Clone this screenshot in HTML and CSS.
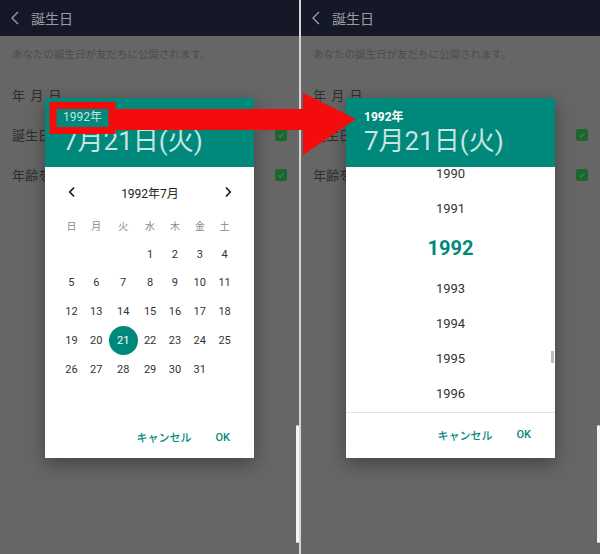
FILE: index.html
```html
<!DOCTYPE html>
<html lang="ja">
<head>
    <meta charset="UTF-8">
    <meta name="viewport" content="width=device-width, initial-scale=1.0">
    <title>誕生日</title>
    <link rel="stylesheet" href="styles.css">
</head>
<body>
    <div class="screens">
        <!-- 左: カレンダー表示 -->
        <section class="phone">
            <header class="appbar">
                <svg class="back" width="10" height="14" viewBox="0 0 10 14"><path d="M8 1L2 7l6 6" fill="none" stroke="currentColor" stroke-width="1.4"/></svg>
                <span class="appbar-title">誕生日</span>
            </header>
            <p class="note">あなたの誕生日が友だちに公開されます。</p>
            <div class="row"><span class="spaced">年 月 日</span></div>
            <div class="row"><span>誕生日を公開</span><span class="check"><svg width="8" height="8" viewBox="0 0 8 8"><path d="M1.5 4.2l1.7 1.6 3.3-3.4" fill="none" stroke="#4f9a63" stroke-width="1"/></svg></span></div>
            <div class="row"><span>年齢を公開</span><span class="check"><svg width="8" height="8" viewBox="0 0 8 8"><path d="M1.5 4.2l1.7 1.6 3.3-3.4" fill="none" stroke="#4f9a63" stroke-width="1"/></svg></span></div>
            <span class="edge"></span>

            <div class="dialog">
                <div class="dialog-head">
                    <div class="head-year">1992年</div>
                    <div class="head-date">7月21日(火)</div>
                </div>
                <div class="dialog-body">
                    <div class="month-nav">
                        <svg width="8" height="12" viewBox="0 0 8 12"><path d="M6 1.5L1.8 6 6 10.5" fill="none" stroke="#222" stroke-width="1.8"/></svg>
                        <span class="month-title">1992年7月</span>
                        <svg width="8" height="12" viewBox="0 0 8 12"><path d="M2 1.5L6.2 6 2 10.5" fill="none" stroke="#222" stroke-width="1.8"/></svg>
                    </div>
                    <div class="cal" id="cal">
                        <span class="wd">日</span><span class="wd">月</span><span class="wd">火</span><span class="wd">水</span><span class="wd">木</span><span class="wd">金</span><span class="wd">土</span>
                    </div>
                </div>
                <div class="dialog-actions">
                    <span>キャンセル</span>
                    <span>OK</span>
                </div>
            </div>
        </section>

        <div class="divider"></div>

        <!-- 右: 年の選択 -->
        <section class="phone">
            <header class="appbar">
                <svg class="back" width="10" height="14" viewBox="0 0 10 14"><path d="M8 1L2 7l6 6" fill="none" stroke="currentColor" stroke-width="1.4"/></svg>
                <span class="appbar-title">誕生日</span>
            </header>
            <p class="note">あなたの誕生日が友だちに公開されます。</p>
            <div class="row"><span class="spaced">年 月 日</span></div>
            <div class="row"><span>誕生日を公開</span><span class="check"><svg width="8" height="8" viewBox="0 0 8 8"><path d="M1.5 4.2l1.7 1.6 3.3-3.4" fill="none" stroke="#4f9a63" stroke-width="1"/></svg></span></div>
            <div class="row"><span>年齢を公開</span><span class="check"><svg width="8" height="8" viewBox="0 0 8 8"><path d="M1.5 4.2l1.7 1.6 3.3-3.4" fill="none" stroke="#4f9a63" stroke-width="1"/></svg></span></div>
            <span class="edge"></span>

            <div class="dialog">
                <div class="dialog-head">
                    <div class="head-year active">1992年</div>
                    <div class="head-date">7月21日(火)</div>
                </div>
                <div class="dialog-body years">
                    <ul class="year-list">
                        <li>1990</li>
                        <li>1991</li>
                        <li class="current">1992</li>
                        <li>1993</li>
                        <li>1994</li>
                        <li>1995</li>
                        <li>1996</li>
                    </ul>
                    <span class="scroll-thumb"></span>
                </div>
                <div class="dialog-actions ruled">
                    <span>キャンセル</span>
                    <span>OK</span>
                </div>
            </div>
        </section>

        <!-- 赤い矢印 -->
        <svg class="callout" width="600" height="200" viewBox="0 0 600 200">
            <rect x="53" y="105.5" width="59" height="25" fill="none" stroke="#f40b0b" stroke-width="7"/>
            <polygon points="112,109 303,109 303,93 356,119 303,155 303,130 112,130" fill="#f40b0b"/>
        </svg>
    </div>

    <script>
        // 1992年7月のカレンダーを組み立てる (1日は水曜日)
        const cal = document.getElementById('cal');
        const firstDay = 3;
        for (let i = 0; i < firstDay; i++) {
            cal.appendChild(document.createElement('span'));
        }
        for (let d = 1; d <= 31; d++) {
            const cell = document.createElement('span');
            cell.className = d === 21 ? 'day selected' : 'day';
            cell.textContent = d;
            cal.appendChild(cell);
        }
    </script>
</body>
</html>
```

FILE: styles.css
```css
body {
    margin: 0;
    padding: 0;
    background-color: #656565;
    font-family: Roboto, "Noto Sans CJK JP", sans-serif;
}

.screens {
    position: relative;
    display: flex;
    width: 600px;
    height: 554px;
    overflow: hidden;
}

.phone {
    position: relative;
    width: 299px;
    height: 554px;
    background-color: #666666;
}

.divider {
    width: 2px;
    background-color: #d6d6d6;
}

.appbar {
    display: flex;
    align-items: center;
    height: 36px;
    padding-left: 10px;
    background-color: #151827;
    color: #9b9da6;
}

.appbar-title {
    margin-left: 11px;
    font-size: 14px;
}

.note {
    margin: 0;
    height: 38px;
    line-height: 38px;
    padding-left: 12px;
    font-size: 10.5px;
    color: #4c4c4c;
}

.row {
    display: flex;
    align-items: center;
    justify-content: space-between;
    height: 40px;
    padding: 0 12px;
    font-size: 13px;
    color: #2e2e2e;
}

.spaced {
    letter-spacing: 1px;
}

.check {
    display: flex;
    align-items: center;
    justify-content: center;
    width: 12px;
    height: 12px;
    margin-top: 1px;
    border-radius: 2px;
    background-color: #1d6630;
}

.edge {
    position: absolute;
    right: 0;
    top: 425px;
    width: 3px;
    height: 118px;
    border-radius: 2px;
    background-color: #f4f4f4;
}

/* ダイアログ */
.dialog {
    position: absolute;
    left: 45px;
    top: 98px;
    width: 209px;
    height: 360px;
    display: flex;
    flex-direction: column;
    background-color: #ffffff;
    box-shadow: 0 6px 18px rgba(0, 0, 0, 0.35);
}

.dialog-head {
    height: 69px;
    box-sizing: border-box;
    padding: 12px 0 0 18px;
    background-color: #00897b;
    color: rgba(255, 255, 255, 0.78);
}

.head-year {
    font-size: 12px;
    line-height: 14px;
}

.head-year.active {
    color: #ffffff;
    font-weight: 700;
}

.head-date {
    margin-top: 1px;
    font-size: 26px;
    line-height: 32px;
}

.dialog-body {
    flex: 1;
}

.month-nav {
    display: flex;
    align-items: center;
    justify-content: space-between;
    height: 38px;
    padding: 6px 22px 0 23px;
}

.month-title {
    font-size: 12px;
    color: #222222;
}

.cal {
    display: grid;
    grid-template-columns: repeat(7, 1fr);
    grid-auto-rows: 28.8px;
    padding: 0 17px 0 14px;
    font-size: 11px;
    color: #333333;
}

.cal span {
    display: flex;
    align-items: center;
    justify-content: center;
}

.cal .wd {
    font-size: 10px;
    color: #8a8a8a;
}

.cal .selected {
    width: 29px;
    height: 29px;
    justify-self: center;
    border-radius: 50%;
    background-color: #00897b;
    color: #ffffff;
}

.dialog-actions {
    display: flex;
    justify-content: flex-end;
    align-items: center;
    gap: 24px;
    height: 42px;
    padding-right: 24px;
    font-size: 11px;
    font-weight: 500;
    color: #00897b;
}

.dialog-actions.ruled {
    height: 46px;
    padding-bottom: 2px;
    box-sizing: border-box;
    border-top: 1px solid #e4e4e4;
}

/* 年リスト */
.years {
    position: relative;
    overflow: hidden;
}

.year-list {
    list-style: none;
    margin: -11px 0 0 0;
    padding: 0;
    text-align: center;
    font-size: 13px;
    color: #333333;
}

.year-list li {
    height: 35px;
    line-height: 35px;
}

.year-list li.current {
    height: 45px;
    line-height: 45px;
    font-size: 20px;
    font-weight: 700;
    color: #00897b;
}

.scroll-thumb {
    position: absolute;
    right: 1px;
    top: 184px;
    width: 3px;
    height: 12px;
    background-color: #bdbdbd;
}

.callout {
    position: absolute;
    left: 0;
    top: 0;
}
```
